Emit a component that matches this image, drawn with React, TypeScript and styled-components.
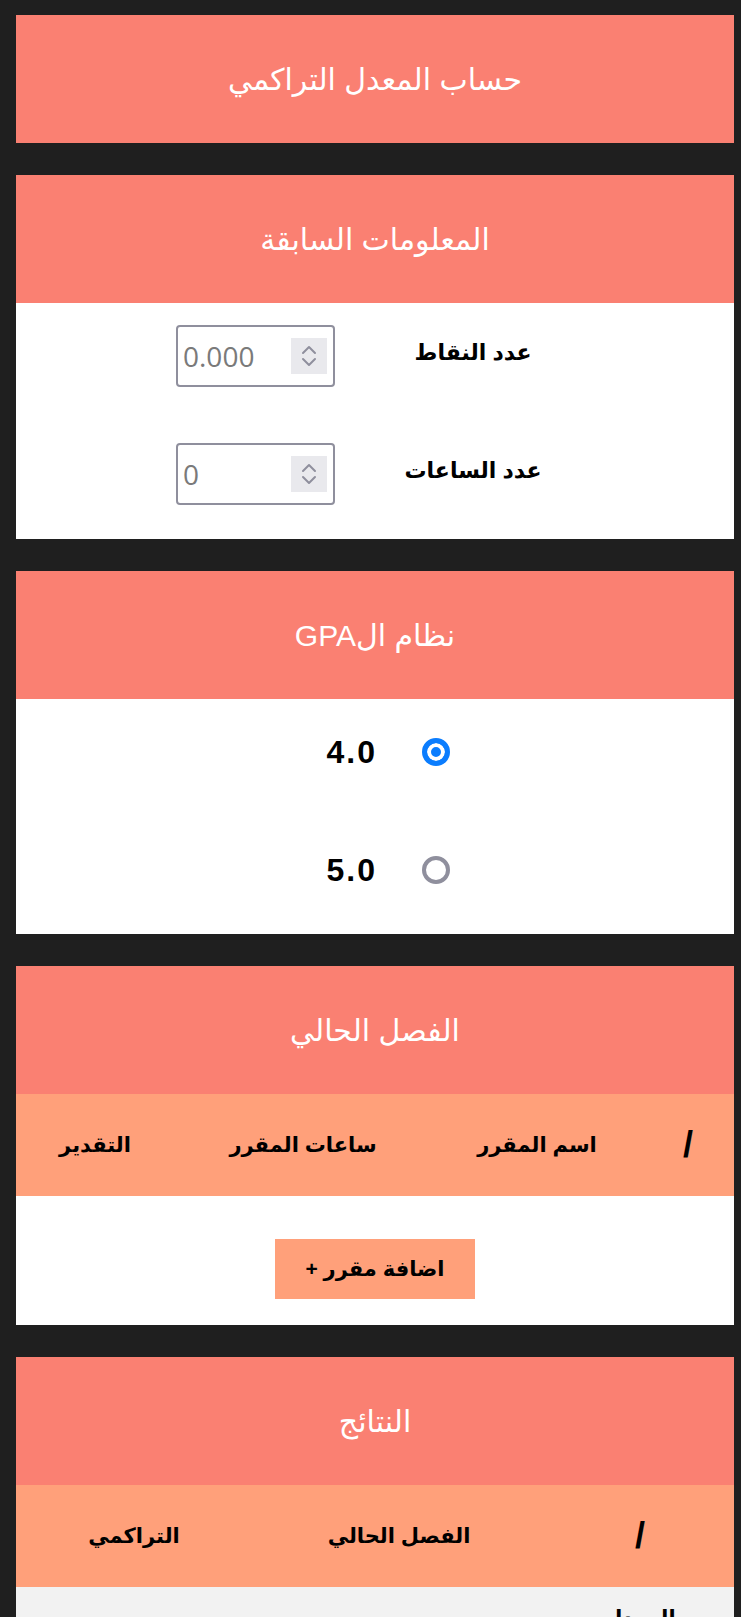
import React, { useState } from 'react';
import styled, { createGlobalStyle } from 'styled-components';

const GlobalStyle = createGlobalStyle`
  html, body { margin: 0; padding: 0; background: #1f1f1f; }
  body { font-family: "Liberation Sans", "DejaVu Sans", sans-serif; }
  * { box-sizing: border-box; }
`;

const Page = styled.main`
  direction: rtl;
  display: flex;
  flex-direction: column;
  gap: 32px;
  padding: 15px 7px 0 16px;
`;

const Card = styled.section`
  background: #ffffff;
  display: flex;
  flex-direction: column;
`;

const CardHeader = styled.h2`
  margin: 0;
  height: 128px;
  background: #fa8072;
  color: #ffffff;
  font-weight: normal;
  font-size: 30px;
  display: flex;
  align-items: center;
  justify-content: center;
`;

const FieldGrid = styled.div`
  display: grid;
  grid-template-columns: 160px 159px;
  column-gap: 58px;
  row-gap: 56px;
  justify-content: center;
  align-items: center;
  padding: 22px 21px 34px 0;
`;

const FieldLabel = styled.label`
  font-weight: bold;
  font-size: 22px;
  color: #000;
  text-align: center;
  margin-top: -6px;
`;

const NumberBox = styled.div`
  direction: ltr;
  width: 159px;
  height: 62px;
  border: 2px solid #8f8f9d;
  border-radius: 4px;
  display: flex;
  align-items: center;
  padding: 0 6px 0 5px;
  background: #fff;
`;

const NumberInput = styled.input`
  flex: 1;
  min-width: 0;
  border: none;
  outline: none;
  padding: 0;
  background: transparent;
  font-family: "Open Sans", sans-serif;
  font-size: 28px;
  color: #6e6e6e;
  &::placeholder { color: #7a7a7a; opacity: 1; }
`;

const Spinner = styled.span`
  width: 36px;
  height: 36px;
  background: #e9e9ed;
  display: flex;
  align-items: center;
  justify-content: center;
  flex-shrink: 0;
`;

const RadioList = styled.div`
  display: flex;
  flex-direction: column;
  gap: 78px;
  padding: 33px 0 44px 26px;
`;

const RadioRow = styled.label`
  display: flex;
  align-items: center;
  justify-content: center;
  gap: 43px;
  height: 40px;
`;

const RadioInput = styled.input`
  appearance: none;
  margin: 0;
  width: 28px;
  height: 28px;
  border-radius: 50%;
  border: 4px solid #8f8f9d;
  background: #fff;
  &:checked {
    border: 5px solid #0b7dfe;
    background: #0b7dfe;
    box-shadow: inset 0 0 0 4px #fff;
  }
`;

const RadioText = styled.span`
  font-weight: bold;
  font-size: 32px;
  letter-spacing: 2px;
  color: #000;
  width: 52px;
  text-align: left;
  direction: ltr;
`;

const HeadRow = styled.div<{ $cols: string }>`
  display: grid;
  grid-template-columns: ${(p) => p.$cols};
  height: 102px;
  align-items: center;
  background: #ffa07a;
`;

const HeadCell = styled.div`
  text-align: center;
  font-weight: bold;
  font-size: 21px;
  color: #000;
`;

const Slash = styled.span`
  font-family: "Liberation Sans", sans-serif;
  font-size: 36px;
  font-weight: bold;
`;

const ActionArea = styled.div`
  display: flex;
  justify-content: center;
  padding: 43px 0 26px;
`;

const AddButton = styled.button`
  width: 200px;
  height: 60px;
  border: none;
  background: #ffa07a;
  font-family: inherit;
  font-weight: bold;
  font-size: 21px;
  color: #000;
`;

const DataRow = styled.div<{ $cols: string }>`
  display: grid;
  grid-template-columns: ${(p) => p.$cols};
  background: #f2f2f2;
  padding: 18px 0 60px;
  line-height: 1.2;
`;

const DataCell = styled.div`
  text-align: center;
  font-weight: bold;
  font-size: 21px;
  color: #000;
`;

const Chevrons = () => (
  <svg width="16" height="22" viewBox="0 0 16 22" fill="none" stroke="#8f8f9d" strokeWidth="2" strokeLinecap="round" strokeLinejoin="round">
    <path d="M2 8 L8 2 L14 8" />
    <path d="M2 14 L8 20 L14 14" />
  </svg>
);

const NumberField = ({ placeholder }: { placeholder: string }) => (
  <NumberBox>
    <NumberInput type="text" placeholder={placeholder} />
    <Spinner>
      <Chevrons />
    </Spinner>
  </NumberBox>
);

const courseCols = '92px 210px 258px 1fr';
const resultCols = '188px 294px 1fr';

export default function App() {
  const [scale, setScale] = useState('4');
  return (
    <>
      <GlobalStyle />
      <Page>
        <Card>
          <CardHeader>حساب المعدل التراكمي</CardHeader>
        </Card>

        <Card>
          <CardHeader>المعلومات السابقة</CardHeader>
          <FieldGrid>
            <FieldLabel>عدد النقاط</FieldLabel>
            <NumberField placeholder="0.000" />
            <FieldLabel>عدد الساعات</FieldLabel>
            <NumberField placeholder="0" />
          </FieldGrid>
        </Card>

        <Card>
          <CardHeader>نظام الGPA</CardHeader>
          <RadioList>
            <RadioRow>
              <RadioInput type="radio" name="scale" checked={scale === '4'} onChange={() => setScale('4')} />
              <RadioText>4.0</RadioText>
            </RadioRow>
            <RadioRow>
              <RadioInput type="radio" name="scale" checked={scale === '5'} onChange={() => setScale('5')} />
              <RadioText>5.0</RadioText>
            </RadioRow>
          </RadioList>
        </Card>

        <Card>
          <CardHeader>الفصل الحالي</CardHeader>
          <HeadRow $cols={courseCols}>
            <HeadCell><Slash>/</Slash></HeadCell>
            <HeadCell>اسم المقرر</HeadCell>
            <HeadCell>ساعات المقرر</HeadCell>
            <HeadCell>التقدير</HeadCell>
          </HeadRow>
          <ActionArea>
            <AddButton type="button">اضافة مقرر +</AddButton>
          </ActionArea>
        </Card>

        <Card>
          <CardHeader>النتائج</CardHeader>
          <HeadRow $cols={resultCols}>
            <HeadCell><Slash>/</Slash></HeadCell>
            <HeadCell>الفصل الحالي</HeadCell>
            <HeadCell>التراكمي</HeadCell>
          </HeadRow>
          <DataRow $cols={resultCols}>
            <DataCell>المعدل</DataCell>
            <DataCell />
            <DataCell />
          </DataRow>
        </Card>
      </Page>
    </>
  );
}
